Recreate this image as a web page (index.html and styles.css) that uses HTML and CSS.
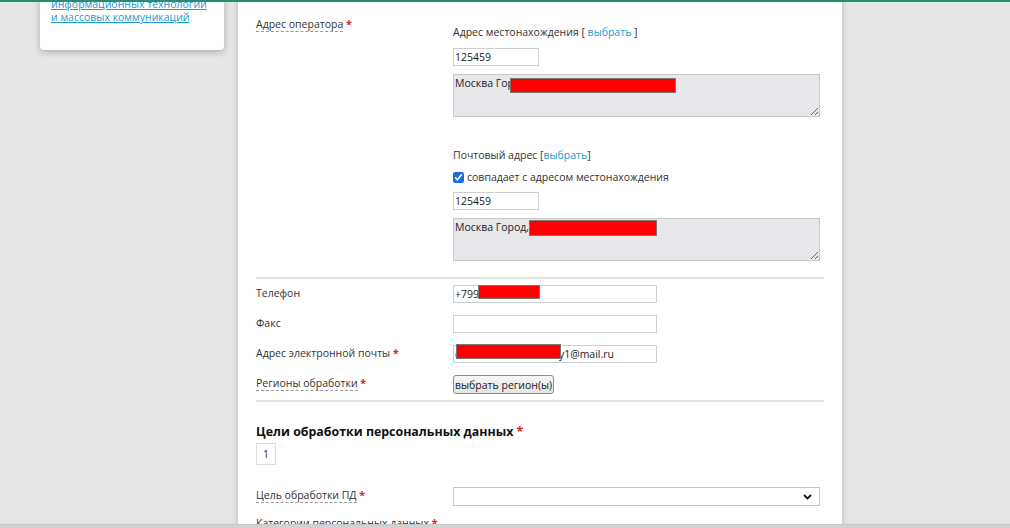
FILE: index.html
```html
<!DOCTYPE html>
<html lang="ru">
<head>
    <meta charset="UTF-8">
    <meta name="viewport" content="width=device-width, initial-scale=1.0">
    <title>Уведомление об обработке персональных данных</title>
    <link rel="stylesheet" href="styles.css">
</head>
<body>
    <div class="topline"></div>

    <div class="page">
        <div class="side">
            <div class="side-card">
                <a href="#">информационных технологий<br>и массовых коммуникаций</a>
            </div>
        </div>

        <div class="main">
            <!-- адрес оператора -->
            <div class="row addr-row">
                <div class="label"><span class="hint">Адрес оператора</span> <span class="req">*</span></div>
                <div class="field">
                    <p class="sub sub-first">Адрес местонахождения [ <a href="#">выбрать</a> ]</p>
                    <input class="zip" type="text" value="125459">
                    <div class="masked">
                        <textarea class="addr" readonly>Москва Гор</textarea>
                        <span class="redact redact-addr1"></span>
                    </div>

                    <p class="sub sub-post">Почтовый адрес [<a href="#">выбрать</a>]</p>
                    <label class="check"><input type="checkbox" checked> совпадает с адресом местонахождения</label>
                    <input class="zip" type="text" value="125459">
                    <div class="masked">
                        <textarea class="addr" readonly>Москва Город,</textarea>
                        <span class="redact redact-addr2"></span>
                    </div>
                </div>
            </div>

            <hr class="sep">

            <div class="row line-row">
                <div class="label">Телефон</div>
                <div class="field masked">
                    <input class="wide" type="text" value="+799">
                    <span class="redact redact-phone"></span>
                </div>
            </div>
            <div class="row line-row">
                <div class="label">Факс</div>
                <div class="field"><input class="wide" type="text" value=""></div>
            </div>
            <div class="row line-row">
                <div class="label">Адрес электронной почты <span class="req">*</span></div>
                <div class="field masked">
                    <input class="wide" type="text" value="cxxxxxxxxxxxxxxxxxxy1@mail.ru">
                    <span class="redact redact-mail"></span>
                </div>
            </div>
            <div class="row line-row last-row">
                <div class="label"><span class="hint">Регионы обработки</span> <span class="req">*</span></div>
                <div class="field"><button class="btn">выбрать регион(ы)</button></div>
            </div>

            <hr class="sep sep-2">

            <h2 class="title">Цели обработки персональных данных <span class="req">*</span></h2>
            <div class="tabs"><span class="tab">1</span></div>

            <div class="row goal-row">
                <div class="label"><span class="hint">Цель обработки ПД</span> <span class="req">*</span></div>
                <div class="field select-wrap">
                    <select class="goal"><option></option></select>
                    <svg class="chev" width="9" height="6" viewBox="0 0 9 6"><path d="M1 1l3.5 3.5L8 1" fill="none" stroke="#111" stroke-width="1.8"/></svg>
                </div>
            </div>
            <div class="row">
                <div class="label label-wide"><span class="hint">Категории персональных данных</span> <span class="req">*</span></div>
            </div>
        </div>
    </div>

    <div class="bottomline"></div>
</body>
</html>
```

FILE: styles.css
```css
html, body {
    margin: 0;
    height: 528px;
    overflow: hidden;
}
body {
    background: #e6e6e6;
    font-family: "Open Sans", "DejaVu Sans", sans-serif;
    font-size: 10.5px;
    color: #333;
}
a {
    color: #1a9bd0;
    text-decoration: none;
}
.topline {
    position: fixed;
    top: 0;
    left: 0;
    right: 0;
    height: 2px;
    background: #2b8a72;
    z-index: 5;
}
.bottomline {
    position: fixed;
    left: 0;
    right: 0;
    bottom: 0;
    height: 3px;
    background: #d2d2d4;
    border-top: 1px solid #c8c8c8;
}
.page {
    display: flex;
    align-items: flex-start;
}
.side {
    width: 184px;
    margin-left: 40px;
}
.side-card {
    background: #fff;
    height: 52px;
    padding: 0 11px;
    border-radius: 0 0 4px 4px;
    box-shadow: 0 2px 6px rgba(0, 0, 0, 0.25);
    line-height: 13px;
    margin-top: -2px;
}
.side-card a {
    display: block;
    text-decoration: underline;
    color: #1a9bd0;
    white-space: nowrap;
}
.main {
    width: 568px;
    margin-left: 14px;
    background: #fff;
    padding: 16px 18px 40px;
    min-height: 560px;
    box-shadow: 0 0 6px rgba(0, 0, 0, 0.22);
}
.row {
    display: flex;
}
.label {
    width: 197px;
    flex: none;
    line-height: 16px;
}
.label-wide {
    width: auto;
}
.hint {
    border-bottom: 1px dashed #999;
}
.req {
    color: #e02020;
    font-weight: bold;
}
.field {
    flex: 1;
}
.sub {
    margin: 0;
    line-height: 16px;
}
.sub-first {
    margin-top: 8px;
    margin-bottom: 8px;
}
.sub-post {
    margin-top: 30px;
    margin-bottom: 6px;
}
input[type=text] {
    font-family: "Open Sans", "DejaVu Sans", sans-serif;
    font-size: 10.5px;
    color: #222;
    border: 1px solid #cfcfcf;
    height: 18px;
    padding: 0 1px;
    box-sizing: border-box;
    display: block;
    outline: none;
}
.zip {
    width: 86px;
    margin-bottom: 8px;
}
.wide {
    width: 204px;
}
.masked {
    position: relative;
}
.addr {
    display: block;
    width: 367px;
    height: 43px;
    box-sizing: border-box;
    background: #e8e8ec;
    border: 1px solid #c6c6cc;
    font-family: "Open Sans", "DejaVu Sans", sans-serif;
    font-size: 10.5px;
    color: #222;
    padding: 1px 1px;
    resize: vertical;
    margin: 0;
}
.redact {
    position: absolute;
    background: #ff0000;
    border: 1px solid #777;
    box-sizing: border-box;
}
.redact-addr1 {
    left: 57px;
    top: 4px;
    width: 166px;
    height: 15px;
}
.redact-addr2 {
    left: 76px;
    top: 2px;
    width: 128px;
    height: 16px;
}
.redact-phone {
    left: 25px;
    top: 0;
    width: 62px;
    height: 14px;
}
.redact-mail {
    left: 3px;
    top: -1px;
    width: 105px;
    height: 15px;
}
.check {
    display: flex;
    align-items: center;
    gap: 3px;
    line-height: 16px;
    margin-bottom: 7px;
}
.check input {
    margin: 0;
    width: 11px;
    height: 11px;
    accent-color: #1a6fe0;
}
.sep {
    border: 0;
    border-top: 2px solid #e2e2e2;
    margin: 16px 0 6px;
}
.sep-2 {
    margin-top: 6px;
}
.line-row {
    height: 30px;
    align-items: flex-start;
}
.last-row {
    height: 19px;
}
.btn {
    font-family: "Open Sans", "DejaVu Sans", sans-serif;
    font-size: 10.5px;
    color: #222;
    background: linear-gradient(#f7f7f7, #e4e4e4);
    border: 1px solid #8d8d8d;
    border-radius: 3px;
    height: 19px;
    padding: 0 1px;
    margin: 0;
}
.title {
    font-size: 12.4px;
    font-weight: bold;
    color: #111;
    margin: 21px 0 2px;
    line-height: 18px;
}
.tabs {
    display: flex;
    margin-bottom: 22px;
}
.tab {
    width: 20px;
    height: 22px;
    box-sizing: border-box;
    border: 1px solid #ddd;
    display: flex;
    align-items: center;
    justify-content: center;
}
.goal-row {
    height: 28px;
    align-items: flex-start;
}
.select-wrap {
    position: relative;
}
.goal {
    appearance: none;
    display: block;
    width: 367px;
    height: 19px;
    border: 1px solid #c6c6c6;
    background: #fff;
    margin: 0;
}
.chev {
    position: absolute;
    left: 350px;
    top: 7px;
}
```
